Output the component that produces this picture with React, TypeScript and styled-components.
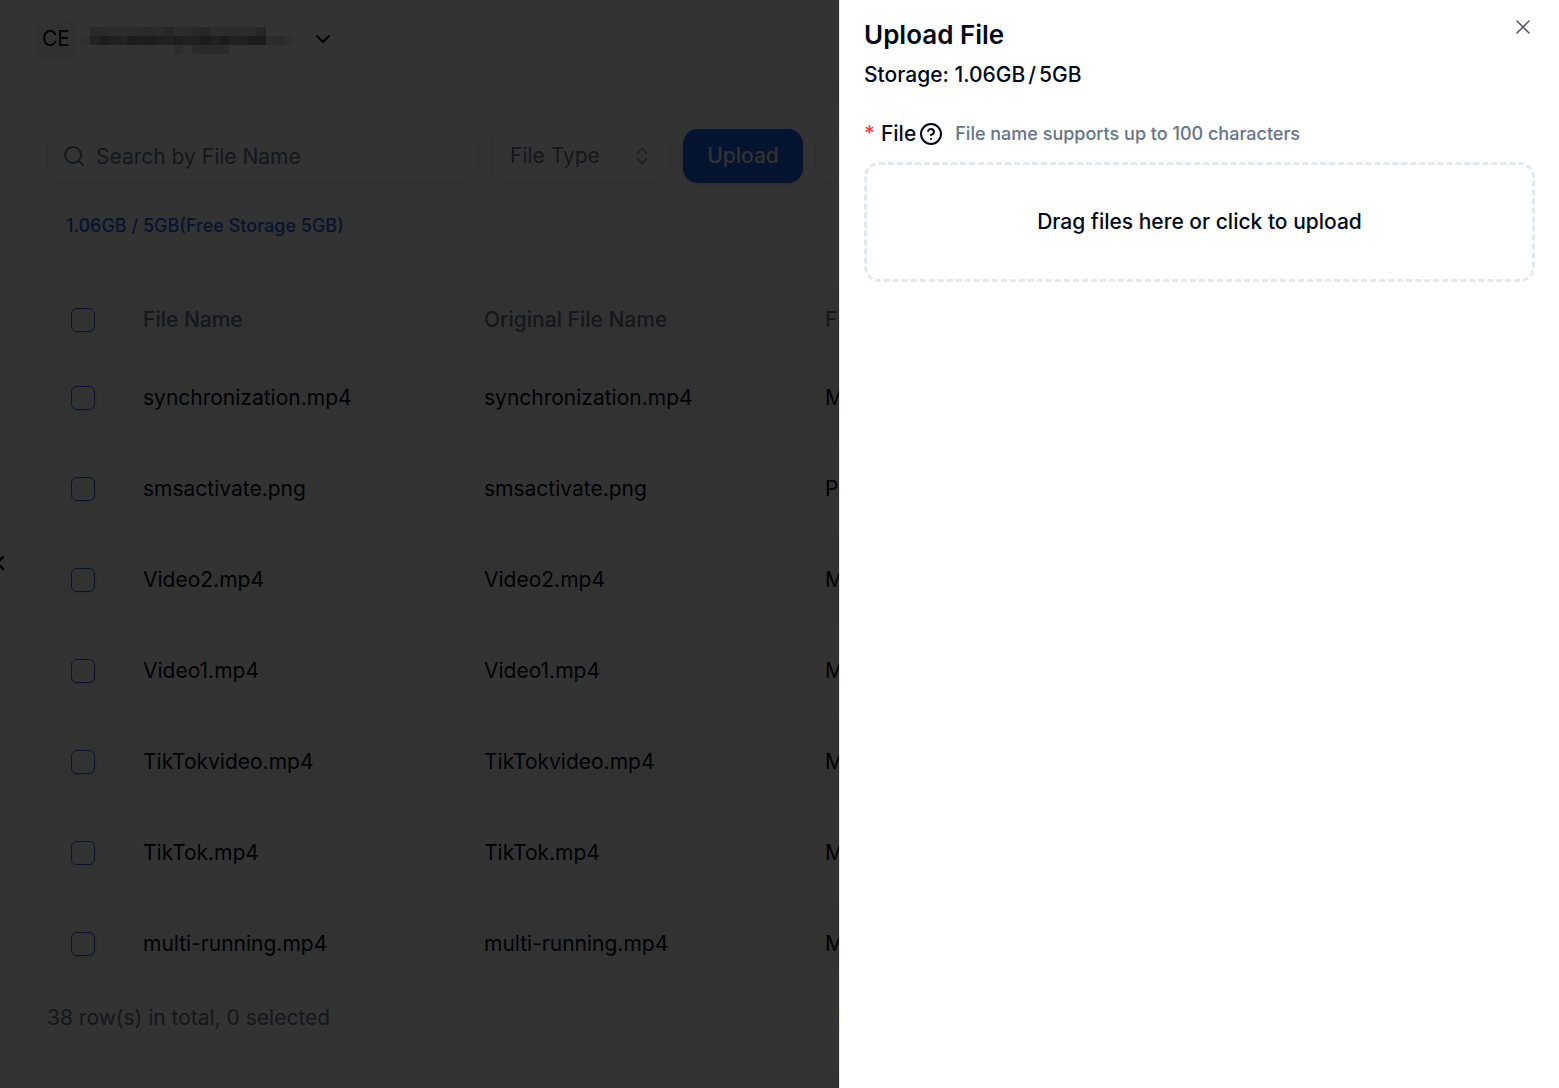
import React from "react";
import styled, { createGlobalStyle } from "styled-components";
import { ChevronDown, ChevronLeft, ChevronsUpDown, CircleHelp, Search, X } from "lucide-react";

const Global = createGlobalStyle`
  *, *::before, *::after { box-sizing: border-box; }
  body { margin: 0; background: #fff; overflow: hidden; }
  body, button, input, select {
    font-family: Inter, "Liberation Sans", sans-serif;
    font-size: 21px;
    line-height: 30px;
    color: #020817;
  }
  h2, p { margin: 0; }
`;

const Page = styled.div`
  position: relative;
  height: 100vh;
  display: flex;
  flex-direction: column;
  overflow: hidden;
  background: #f9fafb;
`;

const Header = styled.header`
  flex: none;
  display: flex;
  align-items: center;
  height: 82px;
  padding: 0 36px 4px;
  background: #fff;
  border-bottom: 1px solid #e8ebef;
  box-shadow: 0 1px 3px rgba(0, 0, 0, 0.05);
`;

const Account = styled.button`
  display: flex;
  align-items: center;
  gap: 5px;
  padding: 0;
  border: 0;
  background: none;
`;

const Avatar = styled.span`
  display: grid;
  place-items: center;
  width: 40px;
  height: 42px;
  border-radius: 12px;
  background: #f1f5f9;
`;

const MaskedName = styled.svg`
  display: block;
  margin: 4px 13px 0 0;
`;

const Main = styled.main`
  flex: 1;
  min-height: 0;
  display: flex;
  padding: 23px 24px 20px 23px;
`;

const Card = styled.section`
  flex: 1;
  min-width: 0;
  display: flex;
  flex-direction: column;
  padding: 24px;
  border-radius: 18px;
  background: #fff;
  box-shadow: 0 1px 3px rgba(0, 0, 0, 0.05);
`;

const Toolbar = styled.div`
  display: flex;
  gap: 12px;
  height: 54px;
`;

const field = `
  border: 1px solid #e2e8f0;
  border-radius: 15px;
  background: #fff;
  box-shadow: 0 1px 3px rgba(0, 0, 0, 0.05);
`;

const SearchBox = styled.label`
  ${field}
  display: flex;
  align-items: center;
  gap: 10px;
  width: 432px;
  padding: 0 14px;
  color: #64748b;
  input {
    flex: 1;
    min-width: 0;
    padding: 2px 0 0;
    border: 0;
    outline: 0;
    background: none;
  }
  input::placeholder { color: #64748b; opacity: 1; }
`;

const SelectBox = styled.label`
  ${field}
  display: grid;
  align-items: center;
  width: 180px;
  color: #94a3b8;
  select, svg { grid-area: 1 / 1; }
  svg { justify-self: end; margin-right: 17px; pointer-events: none; }
  select {
    height: 100%;
    padding: 0 18px;
    border: 0;
    appearance: none;
    background: none;
    color: #64748b;
  }
`;

const Primary = styled.button`
  width: 120px;
  border: 0;
  border-radius: 15px;
  background: #1d63ed;
  color: #f8fafc;
  font-weight: 500;
  box-shadow: 0 1px 3px rgba(0, 0, 0, 0.2);
`;

const Outline = styled.button`
  ${field}
  width: 120px;
  font-weight: 500;
`;

const Quota = styled.p`
  margin: 28px 0 40px;
  padding-left: 19px;
  font-size: 18px;
  font-weight: 500;
  color: #1d63ed;
`;

const TableFrame = styled.div`
  flex: 1;
  min-height: 0;
  overflow: hidden;
  border-radius: 18px;
`;

const Table = styled.table`
  width: 100%;
  table-layout: fixed;
  border-collapse: separate;
  border-spacing: 0;
`;

const Head = styled.th<{ $width?: number }>`
  width: ${(p) => (p.$width ? `${p.$width}px` : "auto")};
  height: 78px;
  padding: 0 24px;
  border-bottom: 1px solid #f4f6f8;
  background: #fbfbfb;
  color: #64748b;
  font-weight: 500;
  text-align: left;
`;

const Row = styled.tr`
  background: #fff;
  &:nth-child(odd) { background: #fafafa; }
  &:first-child td { height: 84px; padding-bottom: 6px; }
`;

const Cell = styled.td`
  height: 91px;
  padding: 0 24px;
  &:first-child { background: rgba(0, 0, 0, 0.01); }
`;

const Check = styled.input`
  display: block;
  appearance: none;
  width: 24px;
  height: 24px;
  margin: 0;
  border: 1px solid #1d63ed;
  border-radius: 6px;
  box-shadow: 0 1px 3px rgba(0, 0, 0, 0.1);
`;

const Footer = styled.footer`
  display: flex;
  padding: 33px 0 11px;
  color: #64748b;
`;

const Total = styled.span`
  width: 790px;
`;

const Notice = styled.span`
  color: #f97316;
  white-space: nowrap;
`;

const Collapse = styled.button`
  position: absolute;
  left: -20px;
  top: 545px;
  display: grid;
  place-items: center end;
  width: 36px;
  height: 36px;
  padding: 0 3px 0 0;
  border: 1px solid #eceff3;
  border-radius: 50%;
  background: #fff;
  box-shadow: 0 1px 3px rgba(0, 0, 0, 0.06);
`;

const Overlay = styled.div`
  position: fixed;
  inset: 0;
  background: rgba(0, 0, 0, 0.8);
`;

const Drawer = styled.aside`
  position: fixed;
  top: 0;
  right: 0;
  bottom: 0;
  width: 720px;
  max-width: 100%;
  padding: 18px 24px;
  border-left: 1px solid #e2e8f0;
  background: #fff;
`;

const Title = styled.h2`
  font-size: 26px;
  line-height: 34px;
  font-weight: 600;
`;

const Storage = styled.p`
  margin-top: 8px;
  font-weight: 500;
`;

const Amount = styled.span`
  display: inline-flex;
  gap: 3px;
`;

const FileLine = styled.div`
  display: flex;
  align-items: center;
  gap: 3px;
  margin: 29px 0 13px;
  font-weight: 500;
`;

const Star = styled.span`
  margin-right: 3px;
  color: #ef4444;
`;

const Hint = styled.span`
  margin-left: 9px;
  font-size: 18px;
  color: #64748b;
`;

const Drop = styled.button`
  display: block;
  width: 100%;
  height: 120px;
  padding: 0;
  border: 3px dashed #e2e8f0;
  border-radius: 15px;
  background: #fff;
  font-weight: 500;
`;

const Close = styled.button`
  position: absolute;
  top: 15px;
  right: 24px;
  display: grid;
  padding: 0;
  border: 0;
  background: none;
  color: #4e525d;
`;

const files = [
  ["synchronization.mp4", "MP4"],
  ["smsactivate.png", "PNG"],
  ["Video2.mp4", "MP4"],
  ["Video1.mp4", "MP4"],
  ["TikTokvideo.mp4", "MP4"],
  ["TikTok.mp4", "MP4"],
  ["multi-running.mp4", "MP4"],
];

// Grey level of each mosaic cell, row by row; 255 is an empty cell.
const mosaic = [
  [255, 205, 215, 220, 225, 215, 210, 205, 215, 195, 225, 215, 200, 190, 230, 220, 215, 225, 215, 185, 255, 255, 255],
  [235, 175, 140, 155, 170, 140, 150, 140, 160, 165, 150, 160, 155, 135, 165, 135, 165, 160, 140, 140, 225, 215, 235],
  [255, 255, 255, 255, 255, 255, 255, 255, 255, 255, 220, 255, 210, 215, 210, 215, 255, 255, 255, 255, 255, 255, 255],
];

export default function App() {
  return (
    <>
      <Global />
      <Page>
        <Header>
          <Account aria-label="Account">
            <Avatar>CE</Avatar>
            <MaskedName width="212" height="27" viewBox="0 0 212 27" aria-hidden="true" shapeRendering="crispEdges">
              {mosaic.map((line, y) =>
                line.map((v, x) => (
                  <rect key={`${x}-${y}`} x={x * 9.25} y={y * 9} width="9.25" height="9" fill={`rgb(${v},${v},${v})`} />
                ))
              )}
            </MaskedName>
            <ChevronDown size={24} />
          </Account>
        </Header>
        <Main>
          <Card>
            <Toolbar>
              <SearchBox>
                <Search size={24} />
                <input aria-label="Search by File Name" placeholder="Search by File Name" />
              </SearchBox>
              <SelectBox>
                <select aria-label="File Type">
                  <option>File Type</option>
                </select>
                <ChevronsUpDown size={22} strokeWidth={2} />
              </SelectBox>
              <Primary>Upload</Primary>
              <Outline>Delete</Outline>
            </Toolbar>
            <Quota>1.06GB / 5GB(Free Storage 5GB)</Quota>
            <TableFrame>
              <Table>
                <thead>
                  <tr>
                    <Head $width={72}><Check type="checkbox" aria-label="Select all" /></Head>
                    <Head $width={341}>File Name</Head>
                    <Head $width={341}>Original File Name</Head>
                    <Head>File Type</Head>
                  </tr>
                </thead>
                <tbody>
                  {files.map(([name, type]) => (
                    <Row key={name}>
                      <Cell><Check type="checkbox" aria-label={`Select ${name}`} /></Cell>
                      <Cell>{name}</Cell>
                      <Cell>{name}</Cell>
                      <Cell>{type}</Cell>
                    </Row>
                  ))}
                </tbody>
              </Table>
            </TableFrame>
            <Footer>
              <Total>38 row(s) in total, 0 selected</Total>
              <Notice>Free</Notice>
            </Footer>
          </Card>
        </Main>
        <Collapse aria-label="Collapse sidebar"><ChevronLeft size={24} strokeWidth={2.5} /></Collapse>
      </Page>
      <Overlay />
      <Drawer role="dialog" aria-labelledby="drawer-title">
        <Title id="drawer-title">Upload File</Title>
        <Storage>Storage: <Amount><span>1.06GB</span><span>/</span><span>5GB</span></Amount></Storage>
        <FileLine>
          <Star>*</Star>
          <span>File</span>
          <CircleHelp size={24} />
          <Hint>File name supports up to 100 characters</Hint>
        </FileLine>
        <Drop>Drag files here or click to upload</Drop>
        <Close aria-label="Close"><X size={24} strokeWidth={1.5} /></Close>
      </Drawer>
    </>
  );
}
